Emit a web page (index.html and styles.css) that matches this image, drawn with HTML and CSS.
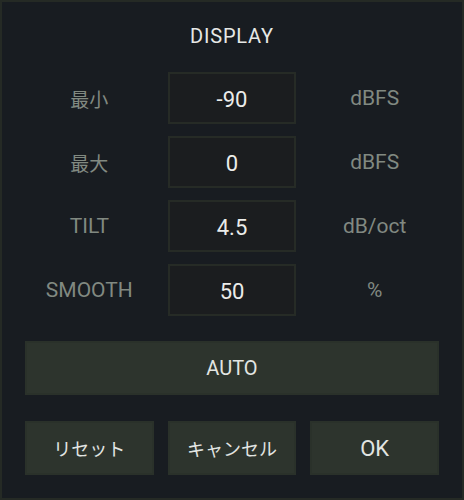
FILE: index.html
```html
<!DOCTYPE html>
<html lang="ja">
<head>
<meta charset="utf-8">
<title>DISPLAY</title>
<link rel="stylesheet" href="styles.css">
</head>
<body>
<div class="dialog">
  <div class="title">DISPLAY</div>
  <div class="rows">
    <div class="label jp">最小</div>
    <div class="field">-90</div>
    <div class="unit">dBFS</div>

    <div class="label jp">最大</div>
    <div class="field">0</div>
    <div class="unit">dBFS</div>

    <div class="label">TILT</div>
    <div class="field">4.5</div>
    <div class="unit">dB/oct</div>

    <div class="label">SMOOTH</div>
    <div class="field">50</div>
    <div class="unit">%</div>
  </div>
  <div class="btn auto">AUTO</div>
  <div class="actions">
    <div class="btn jp">リセット</div>
    <div class="btn jp">キャンセル</div>
    <div class="btn ok">OK</div>
  </div>
</div>
</body>
</html>
```

FILE: styles.css
```css
html, body {
  margin: 0;
  padding: 0;
  background: #181c21;
}

.dialog {
  box-sizing: border-box;
  width: 464px;
  height: 500px;
  border: 2px solid #252a25;
  background: #181c21;
  padding: 22px 23px 23px 23px;
  font-family: Roboto, "Noto Sans CJK JP", sans-serif;
  display: flex;
  flex-direction: column;
}

.title {
  height: 24px;
  line-height: 24px;
  text-align: center;
  font-size: 20px;
  color: #e6e8e6;
  letter-spacing: 0.8px;
  margin-bottom: 24px;
}

.rows {
  display: grid;
  grid-template-columns: 1fr 1fr 1fr;
  column-gap: 14px;
  row-gap: 12px;
  grid-auto-rows: 52px;
}

.label, .unit {
  display: flex;
  align-items: center;
  justify-content: center;
  color: #818981;
  font-size: 21px;
}

.label.jp {
  font-family: "Noto Sans CJK JP", sans-serif;
  font-size: 19px;
}

.field {
  box-sizing: border-box;
  display: flex;
  align-items: center;
  justify-content: center;
  background: #1b1d1f;
  border: 2px solid #262b26;
  color: #ebecea;
  font-size: 22px;
  padding-top: 3px;
}

.btn {
  box-sizing: border-box;
  display: flex;
  align-items: center;
  justify-content: center;
  background: #2d342d;
  border: 2px solid #2a312a;
  color: #e2e5e2;
  font-size: 20px;
  height: 54px;
}

.btn.jp {
  font-family: "Noto Sans CJK JP", sans-serif;
  font-size: 18px;
}

.btn.ok {
  font-size: 22px;
}

.auto {
  margin-top: 25px;
}

.actions {
  margin-top: 26px;
  display: grid;
  grid-template-columns: 1fr 1fr 1fr;
  column-gap: 14px;
}
```
